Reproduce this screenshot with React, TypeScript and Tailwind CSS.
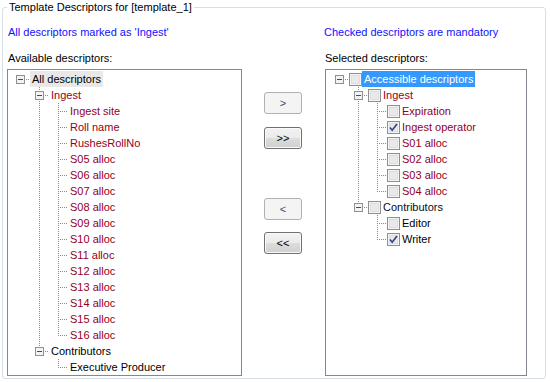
import React from 'react';

type TNode = {
  label: string;
  color?: string;
  children?: TNode[];
  checked?: boolean;
  hl?: 'gray' | 'blue';
};

type FlatRow = {
  level: number;
  node: TNode;
  lines: boolean[];
  hasTop: boolean;
  hasNext: boolean;
};

const RED = '#93001c';
const DOT = '#8a8a8a';

const leftTree: TNode[] = [
  {
    label: 'All descriptors',
    hl: 'gray',
    children: [
      {
        label: 'Ingest',
        color: RED,
        children: [
          'Ingest site',
          'Roll name',
          'RushesRollNo',
          'S05 alloc',
          'S06 alloc',
          'S07 alloc',
          'S08 alloc',
          'S09 alloc',
          'S10 alloc',
          'S11 alloc',
          'S12 alloc',
          'S13 alloc',
          'S14 alloc',
          'S15 alloc',
          'S16 alloc',
        ].map((l) => ({ label: l, color: RED })),
      },
      {
        label: 'Contributors',
        children: [{ label: 'Executive Producer' }],
      },
    ],
  },
];

const rightTree: TNode[] = [
  {
    label: 'Accessible descriptors',
    hl: 'blue',
    children: [
      {
        label: 'Ingest',
        color: RED,
        children: [
          { label: 'Expiration', color: RED },
          { label: 'Ingest operator', color: RED, checked: true },
          { label: 'S01 alloc', color: RED },
          { label: 'S02 alloc', color: RED },
          { label: 'S03 alloc', color: RED },
          { label: 'S04 alloc', color: RED },
        ],
      },
      {
        label: 'Contributors',
        color: '#0a0a1a',
        children: [{ label: 'Editor' }, { label: 'Writer', checked: true }],
      },
    ],
  },
];

function flatten(nodes: TNode[], level: number, lines: boolean[], out: FlatRow[]) {
  nodes.forEach((node, i) => {
    const isLast = i === nodes.length - 1;
    out.push({ level, node, lines, hasTop: level > 0 || i > 0, hasNext: !isLast });
    if (node.children) flatten(node.children, level + 1, [...lines, !isLast], out);
  });
  return out;
}

function CheckBox({ checked }: { checked?: boolean }) {
  return (
    <svg width={13} height={13} className="shrink-0 mt-[2px] self-start" shapeRendering="crispEdges">
      <rect x={0.5} y={0.5} width={12} height={12} fill="#f4f4f4" stroke="#8e8f8f" />
      <rect x={2} y={2} width={9} height={9} fill="#dedede" />
      <rect x={3} y={3} width={7} height={7} fill="#e9e9e9" />
      {checked && (
        <path
          d="M3 6.5 L5.2 9.2 L10 3"
          fill="none"
          stroke="#35448f"
          strokeWidth={1.7}
          shapeRendering="geometricPrecision"
        />
      )}
    </svg>
  );
}

function TreeRow({ row, withCheck }: { row: FlatRow; withCheck?: boolean }) {
  const { level, node, lines, hasTop, hasNext } = row;
  const w = 19 * (level + 1);
  const x0 = 19 * level;
  const cx = x0 + 9.5;
  const expandable = !!node.children;
  const hlClass =
    node.hl === 'blue'
      ? 'bg-[#3399ff] text-white'
      : node.hl === 'gray'
      ? 'bg-[#e8e8e8]'
      : '';
  return (
    <div className="flex h-[16px] shrink-0">
      <svg width={w} height={16} className="shrink-0" shapeRendering="crispEdges">
        {lines.map((l, j) =>
          l ? (
            <line
              key={j}
              x1={19 * j + 9.5}
              y1={0}
              x2={19 * j + 9.5}
              y2={16}
              stroke={DOT}
              strokeDasharray="1 1"
            />
          ) : null
        )}
        {hasTop && <line x1={cx} y1={0} x2={cx} y2={8} stroke={DOT} strokeDasharray="1 1" />}
        {hasNext && <line x1={cx} y1={8} x2={cx} y2={16} stroke={DOT} strokeDasharray="1 1" />}
        <line x1={x0 + 9} y1={8.5} x2={x0 + 19} y2={8.5} stroke={DOT} strokeDasharray="1 1" />
        {expandable && (
          <g>
            <rect x={x0 + 5.5} y={4.5} width={8} height={8} fill="#f3f3f3" stroke="#919191" />
            <line x1={x0 + 7} y1={8.5} x2={x0 + 12} y2={8.5} stroke="#3a4d74" />
          </g>
        )}
      </svg>
      {withCheck && <CheckBox checked={node.checked} />}
      <span
        className={`px-[2px] leading-[16px] h-[16px] whitespace-nowrap ${hlClass}`}
        style={node.hl === 'blue' ? undefined : { color: node.color ?? '#000' }}
      >
        {node.label}
      </span>
    </div>
  );
}

function WinButton({ label, enabled }: { label: string; enabled?: boolean }) {
  return (
    <div
      className={
        enabled
          ? 'w-[38px] h-[22px] rounded-[3px] border border-[#707070] bg-[linear-gradient(#f2f2f2_0%,#ebebeb_50%,#dddddd_50%,#cfcfcf_100%)] shadow-[inset_0_0_0_1px_#fafafa] flex items-center justify-center text-black leading-[14px]'
          : 'w-[38px] h-[22px] rounded-[3px] border border-[#adb2b5] bg-[#f4f4f4] flex items-center justify-center text-[#4a4a6a] leading-[14px]'
      }
    >
      {label}
    </div>
  );
}

export default function App() {
  const leftRows = flatten(leftTree, 0, [], []);
  const rightRows = flatten(rightTree, 0, [], []);
  return (
    <div className="w-[550px] h-[382px] bg-white pl-[2px] font-['Liberation_Sans',Arial,sans-serif] text-[11px] text-black overflow-hidden">
      <fieldset className="w-[544px] h-[379px] border border-[#d5dfe5] rounded-[3px] min-w-0">
        <legend className="ml-[4px] px-[2px] leading-[14px]">Template Descriptors for [template_1]</legend>
        <div className="flex">
          <div className="w-[235px] ml-[4px] flex flex-col shrink-0">
            <div className="mt-[11px] pl-[1px] leading-[14px] text-[#1010ff] whitespace-nowrap">
              All descriptors marked as 'Ingest'
            </div>
            <div className="mt-[12px] pl-[1px] leading-[14px] whitespace-nowrap">Available descriptors:</div>
            <div className="mt-[4px] h-[307px] border border-[#828790] pt-[1px] pl-[3px] overflow-hidden flex flex-col">
              {leftRows.map((r, i) => (
                <TreeRow key={i} row={r} />
              ))}
            </div>
          </div>
          <div className="w-[82px] flex flex-col items-center shrink-0">
            <div className="mt-[78px]">
              <WinButton label=">" />
            </div>
            <div className="mt-[13px]">
              <WinButton label=">>" enabled />
            </div>
            <div className="mt-[49px]">
              <WinButton label="<" />
            </div>
            <div className="mt-[12px]">
              <WinButton label="<<" enabled />
            </div>
          </div>
          <div className="w-[204px] flex flex-col shrink-0">
            <div className="mt-[11px] leading-[14px] text-[#1010ff] whitespace-nowrap">
              Checked descriptors are mandatory
            </div>
            <div className="mt-[12px] pl-[1px] leading-[14px] whitespace-nowrap">Selected descriptors:</div>
            <div className="mt-[4px] ml-[1px] w-[202px] h-[307px] border border-[#828790] pt-[1px] pl-[4px] overflow-hidden flex flex-col">
              {rightRows.map((r, i) => (
                <TreeRow key={i} row={r} withCheck />
              ))}
            </div>
          </div>
        </div>
      </fieldset>
    </div>
  );
}
